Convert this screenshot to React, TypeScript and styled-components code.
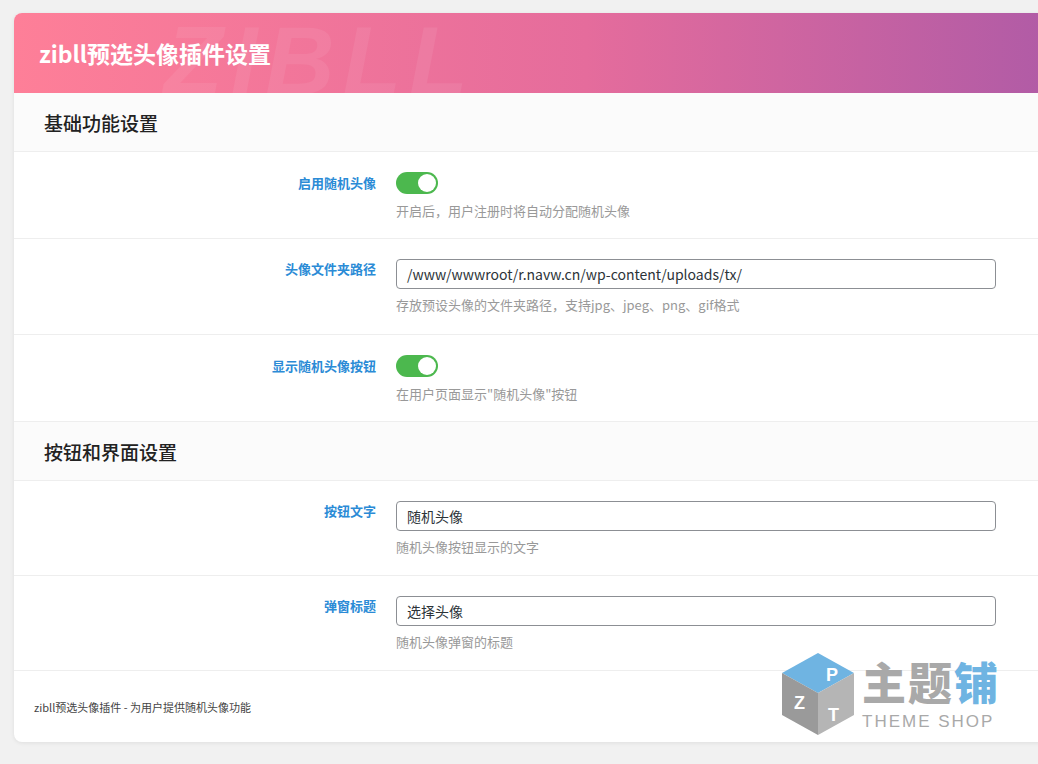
import React from "react";
import styled, { createGlobalStyle } from "styled-components";

const Global = createGlobalStyle`
  body { margin: 0; background: #f1f1f1; font-family: "Noto Sans CJK SC", "Noto Sans", sans-serif; overflow: hidden; }
`;

const Page = styled.div`
  padding: 13px 0 0 14px;
  height: 764px;
  box-sizing: border-box;
  position: relative;
`;

const Card = styled.div`
  width: 1040px;
  background: #fff;
  border-radius: 8px 0 0 8px;
  box-shadow: 0 1px 4px rgba(0,0,0,0.08);
  overflow: hidden;
`;

const Header = styled.div`
  height: 80px;
  background: linear-gradient(90deg, #fe7f98 0%, #e56c9c 55%, #b05ba6 100%);
  display: flex;
  align-items: center;
  padding-left: 25px;
  position: relative;
  overflow: hidden;
`;

const HeaderTitle = styled.h1`
  margin: 0;
  color: #fff;
  font-size: 23px;
  font-weight: 700;
  position: relative;
  z-index: 1;
`;

const Watermark = styled.span`
  position: absolute;
  left: 150px;
  top: 0px;
  font-family: "Liberation Sans", sans-serif;
  font-weight: 900;
  font-style: italic;
  font-size: 96px;
  letter-spacing: 8px;
  color: rgba(255,255,255,0.07);
  line-height: 1;
`;

const SectionHead = styled.div`
  height: 58px;
  display: flex;
  align-items: center;
  padding-left: 30px;
  background: #fbfbfb;
  border-bottom: 1px solid #eee;
  font-size: 19px;
  font-weight: 500;
  color: #222;
`;

const Row = styled.div<{ $h: number }>`
  display: grid;
  grid-template-columns: 362px 600px;
  column-gap: 20px;
  height: ${(p) => p.$h}px;
  box-sizing: border-box;
  padding-top: 20px;
  border-bottom: 1px solid #eee;
`;

const Label = styled.div<{ $top: number }>`
  text-align: right;
  font-size: 13px;
  font-weight: 700;
  color: #2b8bd6;
  padding-top: ${(p) => p.$top}px;
`;

const Control = styled.div`
  display: flex;
  flex-direction: column;
  align-items: flex-start;
`;

const Toggle = styled.div`
  width: 42px;
  height: 22px;
  border-radius: 11px;
  background: #4cb84e;
  position: relative;
  &::after {
    content: "";
    position: absolute;
    right: 2px;
    top: 2px;
    width: 18px;
    height: 18px;
    border-radius: 50%;
    background: #fff;
  }
`;

const Input = styled.div`
  width: 600px;
  height: 30px;
  box-sizing: border-box;
  border: 1px solid #8c8f94;
  border-radius: 4px;
  padding: 0 10px;
  display: flex;
  align-items: center;
  font-size: 14px;
  color: #2c3338;
`;

const Desc = styled.div<{ $mt: number }>`
  margin-top: ${(p) => p.$mt}px;
  font-size: 13px;
  color: #999;
`;

const Footer = styled.div`
  height: 71px;
  display: flex;
  align-items: center;
  padding: 0 20px;
  font-size: 11px;
  color: #444;
`;

const Logo = styled.div`
  position: absolute;
  left: 778px;
  top: 651px;
  display: flex;
  align-items: center;
  gap: 4px;
`;

const LogoText = styled.div`
  display: flex;
  flex-direction: column;
  line-height: 1;
`;

const LogoCn = styled.div`
  font-size: 44px;
  font-weight: 900;
  color: #a9a9a9;
  letter-spacing: 2px;
  span { color: #6fb4e2; }
`;

const LogoEn = styled.div`
  font-family: "Liberation Sans", sans-serif;
  font-size: 17px;
  color: #a9a9a9;
  letter-spacing: 2px;
  margin-top: 10px;
`;

function ToggleRow({ label, desc }: { label: string; desc: string }) {
  return (
    <Row $h={87}>
      <Label $top={1}>{label}</Label>
      <Control>
        <Toggle />
        <Desc $mt={7}>{desc}</Desc>
      </Control>
    </Row>
  );
}

function InputRow({ label, value, desc, h }: { label: string; value: string; desc: string; h: number }) {
  return (
    <Row $h={h}>
      <Label $top={0}>{label}</Label>
      <Control>
        <Input>{value}</Input>
        <Desc $mt={6}>{desc}</Desc>
      </Control>
    </Row>
  );
}

export default function App() {
  return (
    <Page>
      <Global />
      <Card>
        <Header>
          <Watermark>ZIBLL</Watermark>
          <HeaderTitle>zibll预选头像插件设置</HeaderTitle>
        </Header>
        <SectionHead>基础功能设置</SectionHead>
        <ToggleRow label="启用随机头像" desc="开启后，用户注册时将自动分配随机头像" />
        <InputRow h={96} label="头像文件夹路径" value="/www/wwwroot/r.navw.cn/wp-content/uploads/tx/" desc="存放预设头像的文件夹路径，支持jpg、jpeg、png、gif格式" />
        <ToggleRow label="显示随机头像按钮" desc={'在用户页面显示"随机头像"按钮'} />
        <SectionHead>按钮和界面设置</SectionHead>
        <InputRow h={95} label="按钮文字" value="随机头像" desc="随机头像按钮显示的文字" />
        <InputRow h={95} label="弹窗标题" value="选择头像" desc="随机头像弹窗的标题" />
        <Footer>zibll预选头像插件 - 为用户提供随机头像功能</Footer>
      </Card>
      <Logo>
        <svg width="80" height="86" viewBox="0 0 80 86">
          <polygon points="40,2 76,22 40,42 4,22" fill="#6fb4e2" />
          <polygon points="4,22 40,42 40,84 4,64" fill="#9a9a9a" />
          <polygon points="40,42 76,22 76,64 40,84" fill="#b5b5b5" />
          <text x="16" y="58" fill="#fff" fontSize="18" fontWeight="700" fontFamily="Liberation Sans">Z</text>
          <text x="48" y="30" fill="#fff" fontSize="18" fontWeight="700" fontFamily="Liberation Sans">P</text>
          <text x="50" y="70" fill="#fff" fontSize="18" fontWeight="700" fontFamily="Liberation Sans">T</text>
        </svg>
        <LogoText>
          <LogoCn>主题<span>铺</span></LogoCn>
          <LogoEn>THEME SHOP</LogoEn>
        </LogoText>
      </Logo>
    </Page>
  );
}
